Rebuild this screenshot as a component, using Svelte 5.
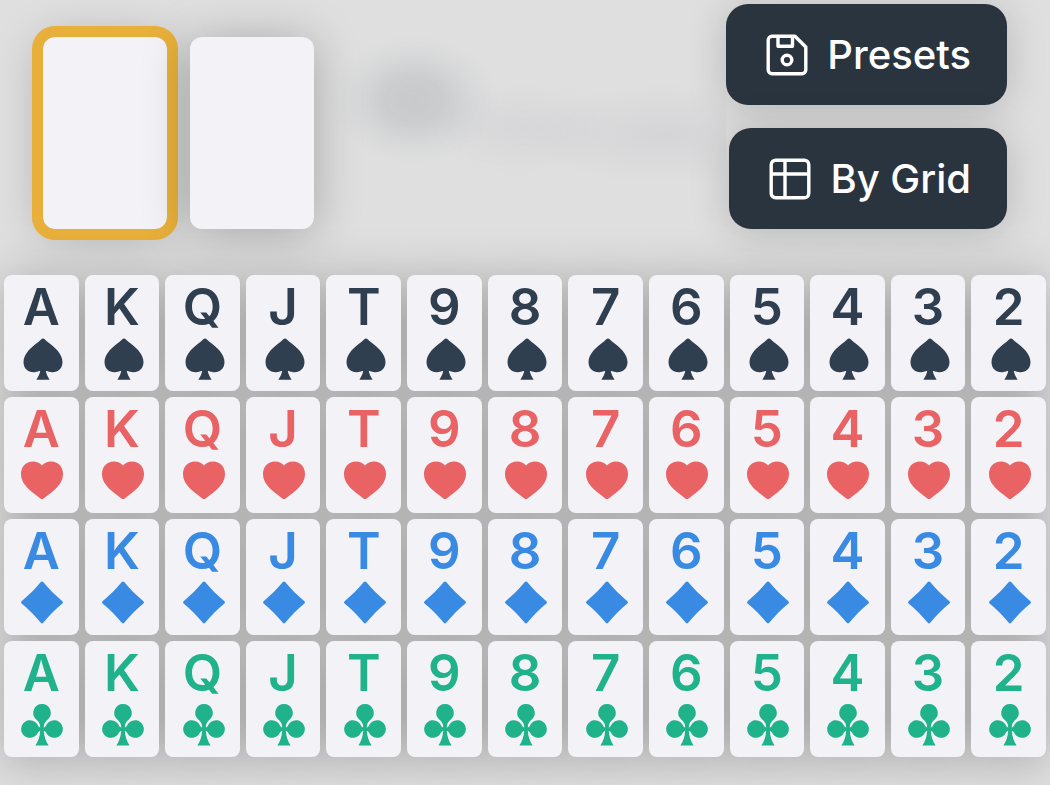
<script lang="ts">
	type Suit = 'spades' | 'hearts' | 'diamonds' | 'clubs';

	const suits: Suit[] = ['spades', 'hearts', 'diamonds', 'clubs'];
	const ranks = ['A', 'K', 'Q', 'J', 'T', '9', '8', '7', '6', '5', '4', '3', '2'];

	const suitPaths: Record<Suit, string> = {
		spades:
			'M24 0.6C25.2 0.6 27 2.8 29 4.2C35 8.6 43.5 15.4 43.5 24C43.5 31.6 37.5 35.1 31.5 34C29.5 33.6 28.4 32.9 26.8 32.9C27.3 36 28.8 38.6 30.6 41.8H17.4C19.2 38.6 20.7 36 21.2 32.9C19.6 32.9 18.5 33.6 16.5 34C10.5 35.1 4.5 31.6 4.5 24C4.5 15.4 13 8.6 19 4.2C21 2.8 22.8 0.6 24 0.6Z',
		hearts:
			'M23 5.4C25.4 2.8 28.4 1.4 32 1.4C39 1.4 44 6.6 44 13.8C44 20.5 40.5 25.3 35 30.3C31 33.8 27.5 36.3 24.6 38.5Q23 39.6 21.4 38.5C18.5 36.3 15 33.8 11 30.3C5.5 25.3 2 20.5 2 13.8C2 6.6 7 1.4 14 1.4C17.6 1.4 20.6 2.8 23 5.4Z',
		diamonds:
			'M21.8 0Q23 -1.2 24.2 0C29.8 6.8 36.2 13.2 43.4 19.2Q44.7 20.4 43.4 21.6C36.2 27.6 29.8 34 24.2 40.8Q23 42 21.8 40.8C16.2 34 9.8 27.6 2.6 21.6Q1.3 20.4 2.6 19.2C9.8 13.2 16.2 6.8 21.8 0Z',
		clubs:
			'M23 0A8.8 8.8 0 0 1 28.8 15.4C26.4 17.6 24.8 19.4 24.8 23.4C25.6 23.4 26.4 22.8 26.8 22A8.8 8.8 0 1 1 27 28.6C26.4 27.6 25.8 27 24.8 27C25.2 32.8 26.8 37 29.6 41.6H16.4C19.2 37 20.8 32.8 21.2 27C20.2 27 19.6 27.6 19 28.6A8.8 8.8 0 1 1 19.2 22C19.6 22.8 20.4 23.4 21.2 23.4C21.2 19.4 19.6 17.6 17.2 15.4A8.8 8.8 0 0 1 23 0Z'
	};

	let hand = $state<(string | null)[]>([null, null]);
	let activeSlot = $state(0);

	function pick(rank: string, suit: Suit) {
		hand[activeSlot] = `${rank} ${suit}`;
		activeSlot = (activeSlot + 1) % hand.length;
	}
</script>

<main class="picker">
	<header class="top">
		<div class="hand">
			{#each hand as card, i}
				<button
					type="button"
					class="slot"
					class:active={i === activeSlot}
					aria-label={card ?? `Empty card ${i + 1}`}
					aria-pressed={i === activeSlot}
					onclick={() => (activeSlot = i)}
				></button>
			{/each}
		</div>
		<div class="backdrop" aria-hidden="true"></div>
		<nav class="modes">
			<button type="button" class="mode">
				<svg viewBox="0 0 42 42" aria-hidden="true">
					<path d="M6 2.2H29L39.8 13V36A4 4 0 0 1 36 39.8H6A4 4 0 0 1 2.2 36V6A4 4 0 0 1 6 2.2Z" />
					<path d="M12 2.2V12.2H26.5V2.2" />
					<circle cx="21" cy="26" r="4.8" />
				</svg>
				Presets
			</button>
			<button type="button" class="mode">
				<svg viewBox="0 0 42 42" aria-hidden="true">
					<rect x="2.2" y="2.2" width="37.6" height="37.6" rx="4.5" />
					<path d="M16 2.2V39.8M2.2 16H39.8" />
				</svg>
				By Grid
			</button>
		</nav>
	</header>

	<section class="deck" aria-label="Deck">
		{#each suits as suit}
			{#each ranks as rank}
				<button type="button" class="card {suit}" aria-label="{rank} of {suit}" onclick={() => pick(rank, suit)}>
					<span class="rank">{rank}</span>
					<svg viewBox="0 0 44 42" aria-hidden="true"><path d={suitPaths[suit]} /></svg>
				</button>
			{/each}
		{/each}
	</section>
</main>

<style>
	:global(body) { margin: 0; background: #dfdfdf; }
	.picker { min-height: 100vh; box-sizing: border-box; overflow: hidden; background: #dfdfdf; font-family: Inter, 'Liberation Sans', sans-serif; }
	button { margin: 0; padding: 0; border: 0; font: inherit; cursor: pointer; }

	.top { display: flex; align-items: stretch; padding: 4px 43px 0; }
	.hand { display: flex; gap: 23px; padding-top: 33px; }
	.slot { width: 124px; height: 192px; border-radius: 12px; background: #f2f2f7; box-shadow: 0 4px 48px rgba(0, 0, 0, 0.26); }
	.slot.active { outline: 11px solid #e8b03a; }
	.backdrop {
		flex: 1;
		background:
			radial-gradient(ellipse 84px 64px at 100px 96px, rgba(160, 166, 172, 0.38) 0%, rgba(160, 166, 172, 0.32) 35%, rgba(160, 166, 172, 0.1) 72%, transparent 100%),
			radial-gradient(ellipse 90px 46px at 208px 124px, rgba(180, 180, 190, 0.2), transparent),
			radial-gradient(ellipse 140px 50px at 350px 130px, rgba(180, 180, 190, 0.24), transparent);
	}
	.modes { display: flex; flex-direction: column; align-items: flex-end; gap: 23px; }
	.mode {
		display: flex;
		align-items: center;
		gap: 19px;
		height: 101px;
		padding: 0 36px 0 40px;
		border-radius: 22px;
		background: #2a343e;
		box-shadow: 0 4px 40px rgba(0, 0, 0, 0.18);
		color: #ffffff;
		font-size: 40px;
		font-weight: 500;
	}
	.mode svg { width: 42px; height: 42px; fill: none; stroke: currentColor; stroke-width: 3.4; stroke-linejoin: round; }

	.deck {
		display: grid;
		grid-template-columns: repeat(13, minmax(0, 1fr));
		gap: 6px;
		padding: 46px 4px 27px;
		filter: drop-shadow(0 4px 24px rgba(0, 0, 0, 0.24));
	}
	.card {
		display: flex;
		flex-direction: column;
		align-items: center;
		gap: 5px;
		padding: 6px 0 11px;
		border-radius: 8px;
		background: #f2f2f7;
	}
	.rank { font-size: 51px; line-height: 52px; font-weight: 600; }
	.card svg { width: 44px; height: 42px; overflow: visible; fill: currentColor; }
	.spades { color: #2f3f50; }
	.hearts { color: #e96264; }
	.diamonds { color: #398ae2; }
	.clubs { color: #20b38b; }
	.card:focus-visible, .mode:focus-visible { outline: 3px solid #e6ae3a; }
</style>
